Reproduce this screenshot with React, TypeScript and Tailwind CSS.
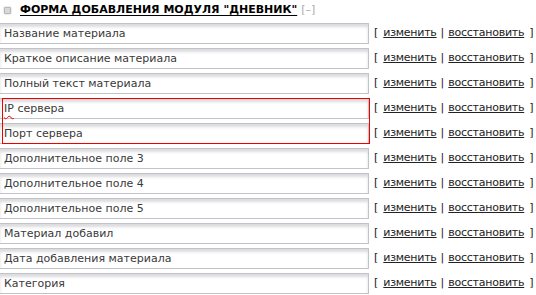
import React from "react";

const rows = [
  "Название материала",
  "Краткое описание материала",
  "Полный текст материала",
  "IP сервера",
  "Порт сервера",
  "Дополнительное поле 3",
  "Дополнительное поле 4",
  "Дополнительное поле 5",
  "Материал добавил",
  "Дата добавления материала",
  "Категория",
];

function Label({ text }: { text: string }) {
  if (text.startsWith("IP")) {
    return (
      <span>
        <span className="underline decoration-wavy decoration-[#e00] decoration-[1px] underline-offset-[3px]">IP</span>
        {text.slice(2)}
      </span>
    );
  }
  return <span>{text}</span>;
}

export default function App() {
  return (
    <div
      className="relative w-[536px] h-[295px] bg-white text-[11px] text-[#333] overflow-hidden"
      style={{ fontFamily: '"DejaVu Sans", Verdana, sans-serif' }}
    >
      <div className="flex items-center h-[19px] pt-[1px]">
        <span className="ml-[4px] w-[7px] h-[7px] bg-[#d8d8d8] border border-[#b8b8b8] rounded-[1px] shadow-[0_0_2px_#bbb]" />
        <span className="ml-[9px] font-bold text-black underline underline-offset-2">
          ФОРМА ДОБАВЛЕНИЯ МОДУЛЯ "ДНЕВНИК"
        </span>
        <span className="ml-[4px] text-[#aaa]">[–]</span>
      </div>
      <div className="flex flex-col gap-[4px] mt-[4px]">
        {rows.map((r) => (
          <div key={r} className="flex items-center h-[21px]">
            <div className="shrink-0 w-[370px] h-[21px] -ml-[1px] border border-[#c2c3c8] bg-white shadow-[inset_0_3px_3px_#dcdcdf] flex items-center pl-[4px] text-[#3a3a3a] text-[11px] leading-none">
              <Label text={r} />
            </div>
            <div className="shrink-0 ml-[5px] flex items-center text-[#222] whitespace-nowrap">
              <span>[</span>
              <a className="ml-[5px] underline text-[#222] tracking-[-0.25px]">изменить</a>
              <span className="ml-[4px]">|</span>
              <a className="ml-[4px] underline text-[#222] tracking-[-0.25px]">восстановить</a>
              <span className="ml-[5px]">]</span>
            </div>
          </div>
        ))}
      </div>
      <div className="absolute left-[2px] top-[98px] w-[368px] h-[46px] border border-[#e00] pointer-events-none" />
    </div>
  );
}
